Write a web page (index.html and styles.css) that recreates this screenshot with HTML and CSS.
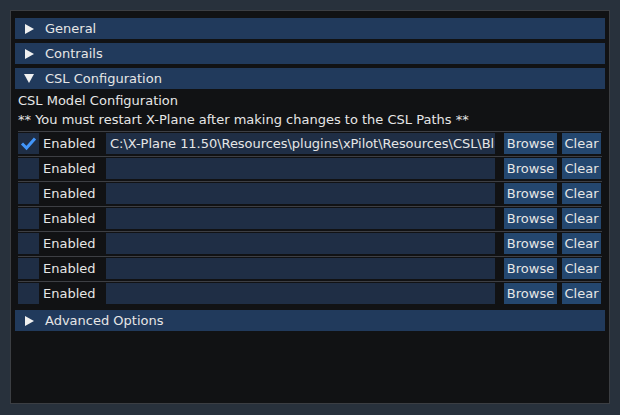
FILE: index.html
```html
<!DOCTYPE html>
<html>
<head>
<meta charset="utf-8">
<link rel="stylesheet" href="styles.css">
</head>
<body>
<div class="window">
  <div class="header"><span class="arrow right"></span>General</div>
  <div class="header"><span class="arrow right"></span>Contrails</div>
  <div class="header"><span class="arrow down"></span>CSL Configuration</div>
  <div class="content">
    <div class="line">CSL Model Configuration</div>
    <div class="line">** You must restart X-Plane after making changes to the CSL Paths **</div>
    <div class="sep"></div>
    <div class="row">
      <span class="check on"><svg viewBox="0 0 21 21" width="21" height="21"><path d="M4 10.5 L8.5 15 L17 5.5" fill="none" stroke="#4296fa" stroke-width="3"/></svg></span>
      <span class="label">Enabled</span>
      <span class="input"><span class="path">C:\X-Plane 11.50\Resources\plugins\xPilot\Resources\CSL\Bluebell</span></span>
      <span class="btn browse">Browse</span>
      <span class="btn clear">Clear</span>
    </div>
    <div class="sep"></div>
    <div class="row">
      <span class="check"></span>
      <span class="label">Enabled</span>
      <span class="input"></span>
      <span class="btn browse">Browse</span>
      <span class="btn clear">Clear</span>
    </div>
    <div class="sep"></div>
    <div class="row">
      <span class="check"></span>
      <span class="label">Enabled</span>
      <span class="input"></span>
      <span class="btn browse">Browse</span>
      <span class="btn clear">Clear</span>
    </div>
    <div class="sep"></div>
    <div class="row">
      <span class="check"></span>
      <span class="label">Enabled</span>
      <span class="input"></span>
      <span class="btn browse">Browse</span>
      <span class="btn clear">Clear</span>
    </div>
    <div class="sep"></div>
    <div class="row">
      <span class="check"></span>
      <span class="label">Enabled</span>
      <span class="input"></span>
      <span class="btn browse">Browse</span>
      <span class="btn clear">Clear</span>
    </div>
    <div class="sep"></div>
    <div class="row">
      <span class="check"></span>
      <span class="label">Enabled</span>
      <span class="input"></span>
      <span class="btn browse">Browse</span>
      <span class="btn clear">Clear</span>
    </div>
    <div class="sep"></div>
    <div class="row">
      <span class="check"></span>
      <span class="label">Enabled</span>
      <span class="input"></span>
      <span class="btn browse">Browse</span>
      <span class="btn clear">Clear</span>
    </div>
  </div>
  <div class="header adv"><span class="arrow right"></span>Advanced Options</div>
</div>
</body>
</html>
```
FILE: styles.css
```css
* { box-sizing: border-box; }
html, body {
  margin: 0;
  padding: 0;
  width: 620px;
  height: 415px;
  background: #28313c;
  overflow: hidden;
}
body {
  padding: 10px 0 0 10px;
  font-family: "DejaVu Sans", sans-serif;
  font-size: 13px;
  color: #e6e6e6;
}
.window {
  width: 600px;
  height: 394px;
  background: #111214;
  border: 1px solid #3b3e43;
  padding: 7px 4px 0 4px;
  display: flex;
  flex-direction: column;
}
.header {
  height: 21px;
  background: #213a5c;
  display: flex;
  align-items: center;
  padding-left: 9px;
  margin-bottom: 4px;
  white-space: nowrap;
}
.arrow {
  width: 0;
  height: 0;
}
.arrow.right {
  border-top: 5px solid transparent;
  border-bottom: 5px solid transparent;
  border-left: 9px solid #f0f0f0;
  margin-left: 1px;
  margin-right: 11px;
}
.arrow.down {
  border-left: 5px solid transparent;
  border-right: 5px solid transparent;
  border-top: 9px solid #f0f0f0;
  margin-right: 11px;
}
.content {
  padding: 0 3px;
  display: flex;
  flex-direction: column;
}
.line {
  height: 15px;
  line-height: 15px;
  margin-bottom: 4px;
  white-space: nowrap;
}
.sep {
  height: 1px;
  background: #3d3f44;
  margin: 0 0 1px 0;
}
.row {
  height: 21px;
  display: flex;
  align-items: stretch;
  margin-bottom: 2px;
}
.check {
  width: 21px;
  height: 21px;
  background: #1f2e45;
  flex: none;
}
.check svg { display: block; }
.label {
  width: 67px;
  padding-left: 4px;
  line-height: 21px;
  flex: none;
}
.input {
  width: 389px;
  flex: none;
  background: #1f2e45;
  line-height: 21px;
  padding-left: 4px;
  overflow: hidden;
}
.path {
  display: block;
  width: 385px;
  white-space: nowrap;
  overflow: hidden;
  text-overflow: clip;
  letter-spacing: -0.04px;
}
.btn {
  flex: none;
  background: #24476f;
  line-height: 21px;
  text-align: center;
}
.browse { width: 53px; margin-left: 9px; }
.clear { width: 39px; margin-left: 5px; }
.adv { margin-top: 4px; }
```
